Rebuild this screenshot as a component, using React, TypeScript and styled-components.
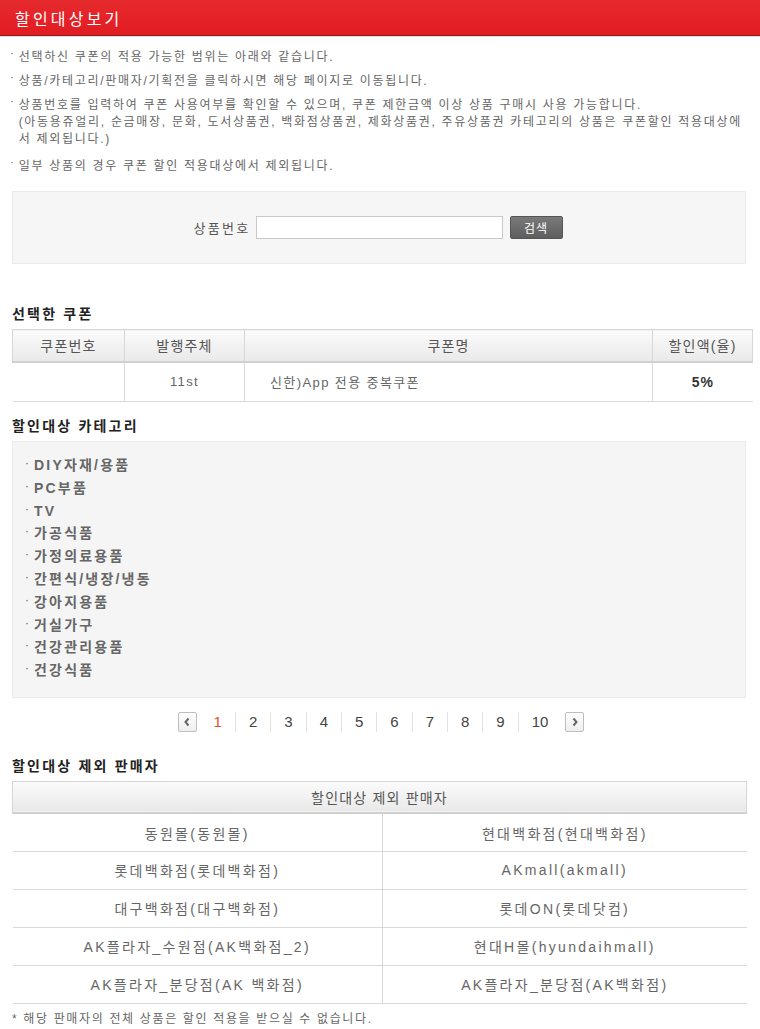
import styled, { createGlobalStyle } from "styled-components";

const GlobalStyle = createGlobalStyle`
  html, body {
    margin: 0;
    padding: 0;
    background: #fff;
  }
  body {
    font-family: "Liberation Sans", "Noto Sans CJK KR", sans-serif;
    color: #666;
    font-size: 12px;
  }
  * {
    box-sizing: border-box;
  }
`;

const notes: React.ReactNode[] = [
  "선택하신 쿠폰의 적용 가능한 범위는 아래와 같습니다.",
  "상품/카테고리/판매자/기획전을 클릭하시면 해당 페이지로 이동됩니다.",
  <>
    상품번호를 입력하여 쿠폰 사용여부를 확인할 수 있으며, 쿠폰 제한금액 이상 상품 구매시 사용 가능합니다.
    <br />
    (아동용쥬얼리, 순금매장, 문화, 도서상품권, 백화점상품권, 제화상품권, 주유상품권 카테고리의 상품은 쿠폰할인 적용대상에
    <br />서 제외됩니다.)
  </>,
  "일부 상품의 경우 쿠폰 할인 적용대상에서 제외됩니다.",
];

const categories = [
  "DIY자재/용품",
  "PC부품",
  "TV",
  "가공식품",
  "가정의료용품",
  "간편식/냉장/냉동",
  "강아지용품",
  "거실가구",
  "건강관리용품",
  "건강식품",
];

const sellers: [string, string][] = [
  ["동원몰(동원몰)", "현대백화점(현대백화점)"],
  ["롯데백화점(롯데백화점)", "AKmall(akmall)"],
  ["대구백화점(대구백화점)", "롯데ON(롯데닷컴)"],
  ["AK플라자_수원점(AK백화점_2)", "현대H몰(hyundaihmall)"],
  ["AK플라자_분당점(AK 백화점)", "AK플라자_분당점(AK백화점)"],
];

const Chevron = ({ dir }: { dir: "left" | "right" }) => (
  <svg width="8" height="10" viewBox="0 0 8 10">
    <path
      d={dir === "left" ? "M5.5 1.5 L2.5 5 L5.5 8.5" : "M2.5 1.5 L5.5 5 L2.5 8.5"}
      fill="none"
      stroke="#666"
      strokeWidth="2"
    />
  </svg>
);

export default function App() {
  return (
    <>
      <GlobalStyle />
      <Page>
        <TitleBar>할인대상보기</TitleBar>
        <Content>
          <NoteList>
            {notes.map((n, i) => (
              <Note key={i}>
                <Dot>·</Dot>
                <span>{n}</span>
              </Note>
            ))}
          </NoteList>

          <SearchBox>
            <SearchLabel>상품번호</SearchLabel>
            <SearchInput type="text" />
            <SearchButton>검색</SearchButton>
          </SearchBox>

          <Heading $top={40}>선택한 쿠폰</Heading>
          <CouponTable>
            <colgroup>
              <col style={{ width: 112 }} />
              <col style={{ width: 120 }} />
              <col style={{ width: 408 }} />
              <col style={{ width: 100 }} />
            </colgroup>
            <thead>
              <tr>
                <HeadCell>쿠폰번호</HeadCell>
                <HeadCell>발행주체</HeadCell>
                <HeadCell>쿠폰명</HeadCell>
                <HeadCell>할인액(율)</HeadCell>
              </tr>
            </thead>
            <tbody>
              <tr>
                <CouponCell></CouponCell>
                <CouponCell>11st</CouponCell>
                <CouponCell $align="left">신한)App 전용 중복쿠폰</CouponCell>
                <CouponCell $strong>5%</CouponCell>
              </tr>
            </tbody>
          </CouponTable>

          <Heading $top={14}>할인대상 카테고리</Heading>
          <CategoryBox>
            {categories.map((c) => (
              <CategoryItem key={c}>
                <CatDot>·</CatDot>
                {c}
              </CategoryItem>
            ))}
          </CategoryBox>

          <Pager>
            <PageArrow>
              <Chevron dir="left" />
            </PageArrow>
            <PageNums>
              {Array.from({ length: 10 }, (_, i) => i + 1).map((n) => (
                <PageNum key={n} $current={n === 1}>
                  {n}
                </PageNum>
              ))}
            </PageNums>
            <PageArrow>
              <Chevron dir="right" />
            </PageArrow>
          </Pager>

          <Heading $top={24}>할인대상 제외 판매자</Heading>
          <SellerTable>
            <colgroup>
              <col style={{ width: 370 }} />
              <col style={{ width: 364 }} />
            </colgroup>
            <thead>
              <tr>
                <HeadCell colSpan={2}>할인대상 제외 판매자</HeadCell>
              </tr>
            </thead>
            <tbody>
              {sellers.map(([a, b]) => (
                <tr key={a}>
                  <SellerCell>{a}</SellerCell>
                  <SellerCell>{b}</SellerCell>
                </tr>
              ))}
            </tbody>
          </SellerTable>
          <FootNote>* 해당 판매자의 전체 상품은 할인 적용을 받으실 수 없습니다.</FootNote>
        </Content>
      </Page>
    </>
  );
}

const Page = styled.div`
  width: 760px;
  min-height: 1029px;
  background: #fff;
`;

const TitleBar = styled.h1`
  margin: 0;
  height: 36px;
  padding: 0 15px;
  display: flex;
  align-items: center;
  background: linear-gradient(#e62a2e, #e11c22);
  border-bottom: 1px solid #8e1a1c;
  box-shadow: 0 1px 1px rgba(0, 0, 0, 0.12);
  color: #fff;
  font-size: 16px;
  font-weight: normal;
  letter-spacing: 3.2px;
`;

const Content = styled.div`
  padding: 13px 8px 0 12px;
`;

const NoteList = styled.ul`
  list-style: none;
  margin: 0 0 0 -2px;
  padding: 0;
  display: flex;
  flex-direction: column;
  gap: 7px;
`;

const Note = styled.li`
  display: flex;
  gap: 5px;
  font-size: 12px;
  line-height: 17px;
  letter-spacing: 1.7px;
  color: #666;
  white-space: nowrap;
  &:last-child {
    margin-top: 3px;
  }
`;

const Dot = styled.span`
  font-size: 11px;
  line-height: 8px;
  letter-spacing: 0;
  color: #555;
`;

const SearchBox = styled.div`
  margin-top: 16px;
  width: 734px;
  height: 73px;
  background: #f6f6f6;
  border: 1px solid #ebebeb;
  display: flex;
  align-items: center;
  justify-content: center;
  gap: 5px;
  padding-right: 2px;
`;

const SearchLabel = styled.span`
  font-size: 13px;
  letter-spacing: 2.3px;
  color: #555;
`;

const SearchInput = styled.input`
  width: 247px;
  height: 23px;
  border: 1px solid #c9c9c9;
  background: #fff;
  padding: 0 4px;
  margin: 0;
  outline: none;
`;

const SearchButton = styled.button`
  margin-left: 2px;
  width: 53px;
  height: 23px;
  border: 1px solid #555;
  border-radius: 2px;
  background: linear-gradient(#7a7a7a, #5e5e5e);
  color: #fff;
  font-family: "Liberation Sans", "Noto Sans CJK KR", sans-serif;
  font-size: 12px;
  letter-spacing: 1px;
  padding: 0;
`;

const Heading = styled.h2<{ $top: number }>`
  margin: ${(p) => p.$top}px 0 5px;
  font-size: 14px;
  line-height: 20px;
  font-weight: bold;
  color: #222;
  letter-spacing: 2.2px;
`;

const BaseTable = styled.table`
  border-collapse: collapse;
  table-layout: fixed;
  font-size: 13px;
`;

const CouponTable = styled(BaseTable)`
  width: 740px;
`;

const SellerTable = styled(BaseTable)`
  width: 734px;
`;

const HeadCell = styled.th`
  height: 32px;
  padding: 0;
  font-weight: normal;
  font-size: 14px;
  letter-spacing: 1.2px;
  color: #555;
  text-align: center;
  background: linear-gradient(#fbfbfb, #e9e9e9);
  border: 1px solid #d6d6d6;
  border-bottom: 2px solid #d0d0d0;
`;

const CouponCell = styled.td<{ $align?: "left"; $strong?: boolean }>`
  height: 40px;
  padding: 0 0 0 ${(p) => (p.$align === "left" ? "25px" : "0")};
  text-align: ${(p) => p.$align ?? "center"};
  color: ${(p) => (p.$strong ? "#333" : "#666")};
  font-weight: ${(p) => (p.$strong ? "bold" : "normal")};
  font-size: ${(p) => (p.$strong ? "14px" : "13px")};
  letter-spacing: ${(p) => (p.$strong ? "1px" : "1.4px")};
  border-bottom: 1px solid #d9d9d9;
  & + & {
    border-left: 1px solid #d9d9d9;
  }
`;

const SellerCell = styled.td`
  height: 38px;
  padding: 0;
  text-align: center;
  color: #666;
  font-size: 14px;
  letter-spacing: 2.3px;
  border-bottom: 1px solid #d9d9d9;
  & + & {
    border-left: 1px solid #d9d9d9;
  }
`;

const CategoryBox = styled.ul`
  list-style: none;
  margin: 0;
  width: 734px;
  padding: 12px 10px 15px 12px;
  background: #f5f5f5;
  border: 1px solid #ebebeb;
`;

const CategoryItem = styled.li`
  display: flex;
  align-items: center;
  font-size: 14px;
  line-height: 22.8px;
  letter-spacing: 2.2px;
  font-weight: bold;
  color: #666;
`;

const CatDot = styled.span`
  font-weight: normal;
  margin-right: 5px;
  font-size: 12px;
  letter-spacing: 0;
  position: relative;
  top: -2px;
`;

const Pager = styled.div`
  margin-top: 14px;
  display: flex;
  justify-content: center;
  align-items: center;
  padding-right: 2px;
`;

const PageArrow = styled.span`
  width: 19px;
  height: 20px;
  border: 1px solid #bfbfbf;
  border-radius: 2px;
  background: linear-gradient(#fff, #eee);
  display: flex;
  align-items: center;
  justify-content: center;
`;

const PageNums = styled.div`
  display: flex;
  align-items: center;
  margin: 0 4px;
`;

const PageNum = styled.span<{ $current?: boolean }>`
  font-family: "Liberation Sans", sans-serif;
  font-size: 15px;
  padding: 0 13px;
  line-height: 20px;
  color: ${(p) => (p.$current ? "#e4502a" : "#444")};
  & + & {
    border-left: 1px solid #e3e3e3;
  }
`;

const FootNote = styled.p`
  margin: 5px 0 0;
  font-size: 12px;
  letter-spacing: 1.65px;
  color: #666;
`;
